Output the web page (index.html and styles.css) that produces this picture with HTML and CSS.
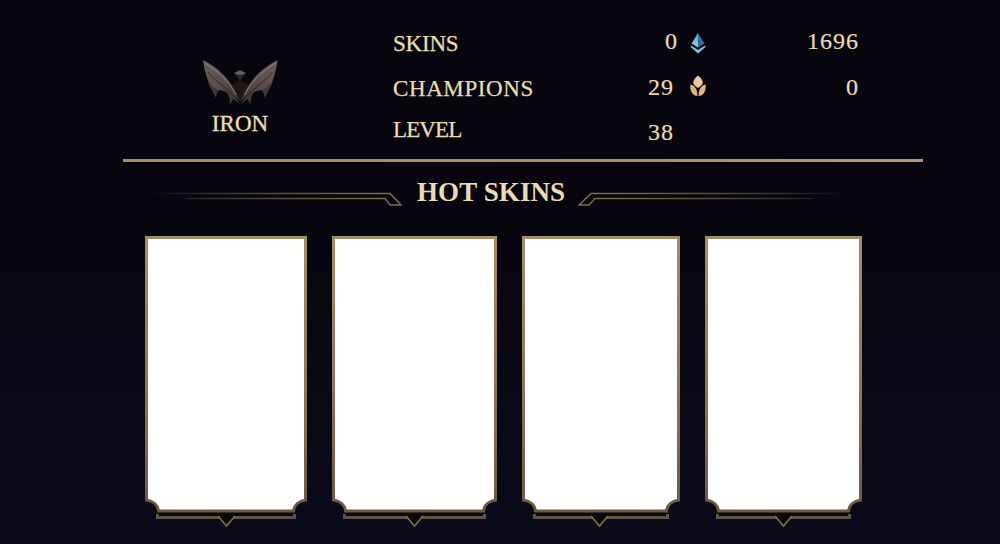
FILE: index.html
```html
<!DOCTYPE html>
<html lang="en">
<head>
<meta charset="utf-8">
<title>Hot skins</title>
<link rel="stylesheet" href="styles.css">
</head>
<body>
<svg class="defs" width="0" height="0" aria-hidden="true">
  <defs>
    <linearGradient id="frame" x1="0" y1="0" x2="0" y2="1">
      <stop offset="0" stop-color="#a28e66"/>
      <stop offset=".5" stop-color="#8c7a58"/>
      <stop offset="1" stop-color="#6a5a45"/>
    </linearGradient>
    <linearGradient id="orn-left" x1="0" y1="0" x2="1" y2="0">
      <stop offset="0" stop-color="#7a6a4f" stop-opacity="0"/>
      <stop offset=".45" stop-color="#6b5c45" stop-opacity=".75"/>
      <stop offset="1" stop-color="#806e4e"/>
    </linearGradient>
    <linearGradient id="orn-right" x1="0" y1="0" x2="1" y2="0">
      <stop offset="0" stop-color="#806e4e"/>
      <stop offset=".55" stop-color="#6b5c45" stop-opacity=".75"/>
      <stop offset="1" stop-color="#7a6a4f" stop-opacity="0"/>
    </linearGradient>
    <linearGradient id="leaf" x1="0" y1="0" x2="1" y2="1">
      <stop offset="0" stop-color="#6b5f5d"/>
      <stop offset=".55" stop-color="#574c4a"/>
      <stop offset="1" stop-color="#3a302e"/>
    </linearGradient>
    <linearGradient id="gem-l" x1="0" y1="0" x2="0" y2="1">
      <stop offset="0" stop-color="#5a9fc4"/>
      <stop offset="1" stop-color="#8fd0e8"/>
    </linearGradient>
  </defs>
</svg>
<main class="page">
  <section class="summary">
    <div class="rank">
      <svg class="emblem" viewBox="0 0 81 50" aria-hidden="true">
        <path fill="#1c1615" d="M30 30L40.300 46L50.600 30L40.300 24Z"/>
        <g id="wing">
          <path fill="#423836" d="M6 19L9 29L14 38L16 42C16.500 36 19 33 23 34C28 36 30 41 30 49L33 43L40 48L28 31Z"/>
          <path fill="url(#leaf)" d="M3 4C12 9 30 18 40 46C34 38 26 35 19 34C10 32 5 20 3 4Z"/>
          <path fill="none" stroke="#9c9092" stroke-width=".8" d="M5 7C14 13 28 22 36 39"/>
          <path fill="none" stroke="#2a2220" stroke-width=".9" d="M8 16C14 24 24 30 35 41"/>
        </g>
        <use href="#wing" transform="matrix(-1 0 0 1 80.600 0)"/>
        <path fill="#2c2423" d="M34 17.300L46 17.300L40 25Z"/>
        <path fill="#6a6060" d="M34 17.300L40 14L46 17.300L40 19Z"/>
      </svg>
      <span class="rank-name">IRON</span>
    </div>
    <div class="stats">
      <span class="label label-skins row-a">SKINS</span>
      <span class="value row-a value-high">0</span>
      <svg class="icon row-a icon-low" viewBox="0 0 16 22" aria-hidden="true">
        <path fill="url(#gem-l)" d="M8 1L1.500 11.500L8 15.500Z"/>
        <path fill="#2f6f96" d="M8 1L14.500 11.500L8 15.500Z"/>
        <path fill="#7cc5e0" d="M1 13.500L8 18L15 13.500L15.500 15L8 21.500L.5 15Z"/>
      </svg>
      <span class="wallet row-a value-high">1696</span>

      <span class="label row-b label-low">CHAMPIONS</span>
      <span class="value row-b value-inset value-high">29</span>
      <svg class="icon row-b icon-high" viewBox="0 0 16 22" aria-hidden="true">
        <path fill="#ecca9c" d="M8 .5C11 3 12.800 5.500 12.800 7.800C12.800 9.500 10.500 11.500 8 13C5.500 11.500 3.200 9.500 3.200 7.800C3.200 5.500 5 3 8 .5Z"/>
        <path fill="#e0b680" d="M.4 9.500C5 10.500 7.500 14 7.400 21C2.500 21 -.4 16 .4 9.500Z"/>
        <path fill="#e0b680" d="M15.600 9.500C11 10.500 8.500 14 8.600 21C13.500 21 16.400 16 15.600 9.500Z"/>
      </svg>
      <span class="wallet row-b value-high">0</span>

      <span class="label label-level row-c">LEVEL</span>
      <span class="value row-c value-inset value-low">38</span>
    </div>
  </section>

  <header class="title-row">
    <svg class="ornament ornament-left" viewBox="0 0 252 18" aria-hidden="true">
      <path fill="none" stroke="url(#orn-left)" stroke-width="1.500" d="M0 3.500H240L251 15H240L235 8.500H35"/>
    </svg>
    <h2 class="title">HOT SKINS</h2>
    <svg class="ornament ornament-right" viewBox="0 0 270 18" aria-hidden="true">
      <path fill="none" stroke="url(#orn-right)" stroke-width="1.500" d="M270 3.500H13L1 15H11L17 8.500H235"/>
    </svg>
  </header>

  <section class="cards">
    <svg class="card" width="162" height="292" viewBox="0 0 162 292" aria-hidden="true">
      <path class="gap" d="M13 275H149V280H13Z"/>
      <path class="tail" d="M12.500 278V281.500H149.500V278"/>
      <path class="notch" d="M73 279H90L81.500 290Z"/>
      <path class="vee" d="M73 280L81.500 290L90 280"/>
      <path class="frame" d="M1.500 1.500H160.500V264C154 265 149 269 148.500 275H13.500C13 269 8 265 1.500 264Z"/>
    </svg>
    <svg class="card" width="165" height="292" viewBox="0 0 165 292" aria-hidden="true">
      <path class="gap" d="M13 275H152V280H13Z"/>
      <path class="tail" d="M12.500 278V281.500H152.500V278"/>
      <path class="notch" d="M74 279H91L82.500 290Z"/>
      <path class="vee" d="M74 280L82.500 290L91 280"/>
      <path class="frame" d="M1.500 1.500H163.500V264C157 265 152 269 151.500 275H13.500C13 269 8 265 1.500 264Z"/>
    </svg>
    <svg class="card" width="158" height="292" viewBox="0 0 158 292" aria-hidden="true">
      <path class="gap" d="M13 275H145V280H13Z"/>
      <path class="tail" d="M12.500 278V281.500H145.500V278"/>
      <path class="notch" d="M69 279H86L77.500 290Z"/>
      <path class="vee" d="M69 280L77.500 290L86 280"/>
      <path class="frame" d="M1.500 1.500H156.500V264C150 265 145 269 144.500 275H13.500C13 269 8 265 1.500 264Z"/>
    </svg>
    <svg class="card" width="157" height="292" viewBox="0 0 157 292" aria-hidden="true">
      <path class="gap" d="M13 275H144V280H13Z"/>
      <path class="tail" d="M12.500 278V281.500H144.500V278"/>
      <path class="notch" d="M70 279H87L78.500 290Z"/>
      <path class="vee" d="M70 280L78.500 290L87 280"/>
      <path class="frame" d="M1.500 1.500H155.500V264C149 265 144 269 143.500 275H13.500C13 269 8 265 1.500 264Z"/>
    </svg>
  </section>
</main>
</body>
</html>
```
FILE: styles.css
```css
* { box-sizing: border-box; }

html, body {
  margin: 0;
  height: 544px;
  overflow: hidden;
}

body {
  background: linear-gradient(180deg, #07060f 0%, #07060f 40%, #0b0a1b 100%);
  color: #ebdcb2;
  font-family: "Liberation Serif", "Times New Roman", serif;
}

.defs { display: block; height: 0; }

.page {
  width: 800px;
  margin-left: 123px;
}

.summary {
  display: flex;
  height: 162px;
  border-bottom: 3px solid #a98e66;
  border-image: linear-gradient(90deg, #a08f62, #a89068 50%, #b59774) 1;
}

.rank {
  width: 219px;
  padding: 0 0 0 16px;
  margin: 10px 0 10px;
  border-right: 1px solid rgba(255, 255, 255, .025);
  display: flex;
  flex-direction: column;
  align-items: center;
}

.emblem {
  width: 81px;
  height: 50px;
  margin-top: 46px;
}

.rank-name {
  font-size: 23px;
  line-height: 26px;
  letter-spacing: .1px;
  margin-top: 5px;
  -webkit-text-stroke: .35px #ebdcb2;
}

.stats {
  display: grid;
  grid-template-columns: 171px 114px 40px 141px;
  grid-template-rows: 44px 48px 36px;
  align-items: center;
  margin-left: 51px;
  padding-top: 20px;
  height: 159px;
}

.label {
  font-size: 23px;
  line-height: 26px;
  letter-spacing: .6px;
  grid-column: 1;
  -webkit-text-stroke: .25px #ebdcb2;
}

.label-skins { letter-spacing: -.2px; padding-top: 3px; }
.label-level { letter-spacing: -.9px; }
.label-low { padding-top: 2px; }

.value, .wallet {
  font-size: 24px;
  line-height: 26px;
  letter-spacing: 1px;
  text-align: right;
  -webkit-text-stroke: .2px #ebdcb2;
}

.value { grid-column: 2; }
.wallet { grid-column: 4; }

.row-a { grid-row: 1; }
.row-b { grid-row: 2; }
.row-c { grid-row: 3; }

.value-high { padding-bottom: 2px; }
.value-inset { padding-right: 4px; }
.value-low { padding-top: 4px; }

.icon {
  grid-column: 3;
  justify-self: center;
  width: 16px;
  height: 22px;
}

.icon-low { margin-top: 2px; }
.icon-high { margin-bottom: 4px; }

.title-row {
  display: flex;
  align-items: center;
  height: 60px;
  margin-bottom: 14px;
  padding-left: 27px;
}

.title {
  margin: 0 13px 0 15px;
  font-size: 27px;
  line-height: 32px;
  font-weight: 700;
  letter-spacing: .1px;
}

.ornament {
  height: 18px;
  margin-top: 14px;
  flex: none;
}

.ornament-left { width: 252px; }
.ornament-right { width: 270px; }

.cards {
  display: grid;
  grid-template-columns: 162px 165px 158px 157px;
  column-gap: 25px;
  margin-left: 22px;
}

.card { display: block; }

.frame {
  fill: #fff;
  stroke: url(#frame);
  stroke-width: 3;
}

.tail {
  fill: none;
  stroke: #5f5341;
  stroke-width: 3;
}

.gap { fill: #0b0906; }

.notch { fill: #0b0906; }

.vee {
  fill: none;
  stroke: #80734f;
  stroke-width: 1.500;
}
```
